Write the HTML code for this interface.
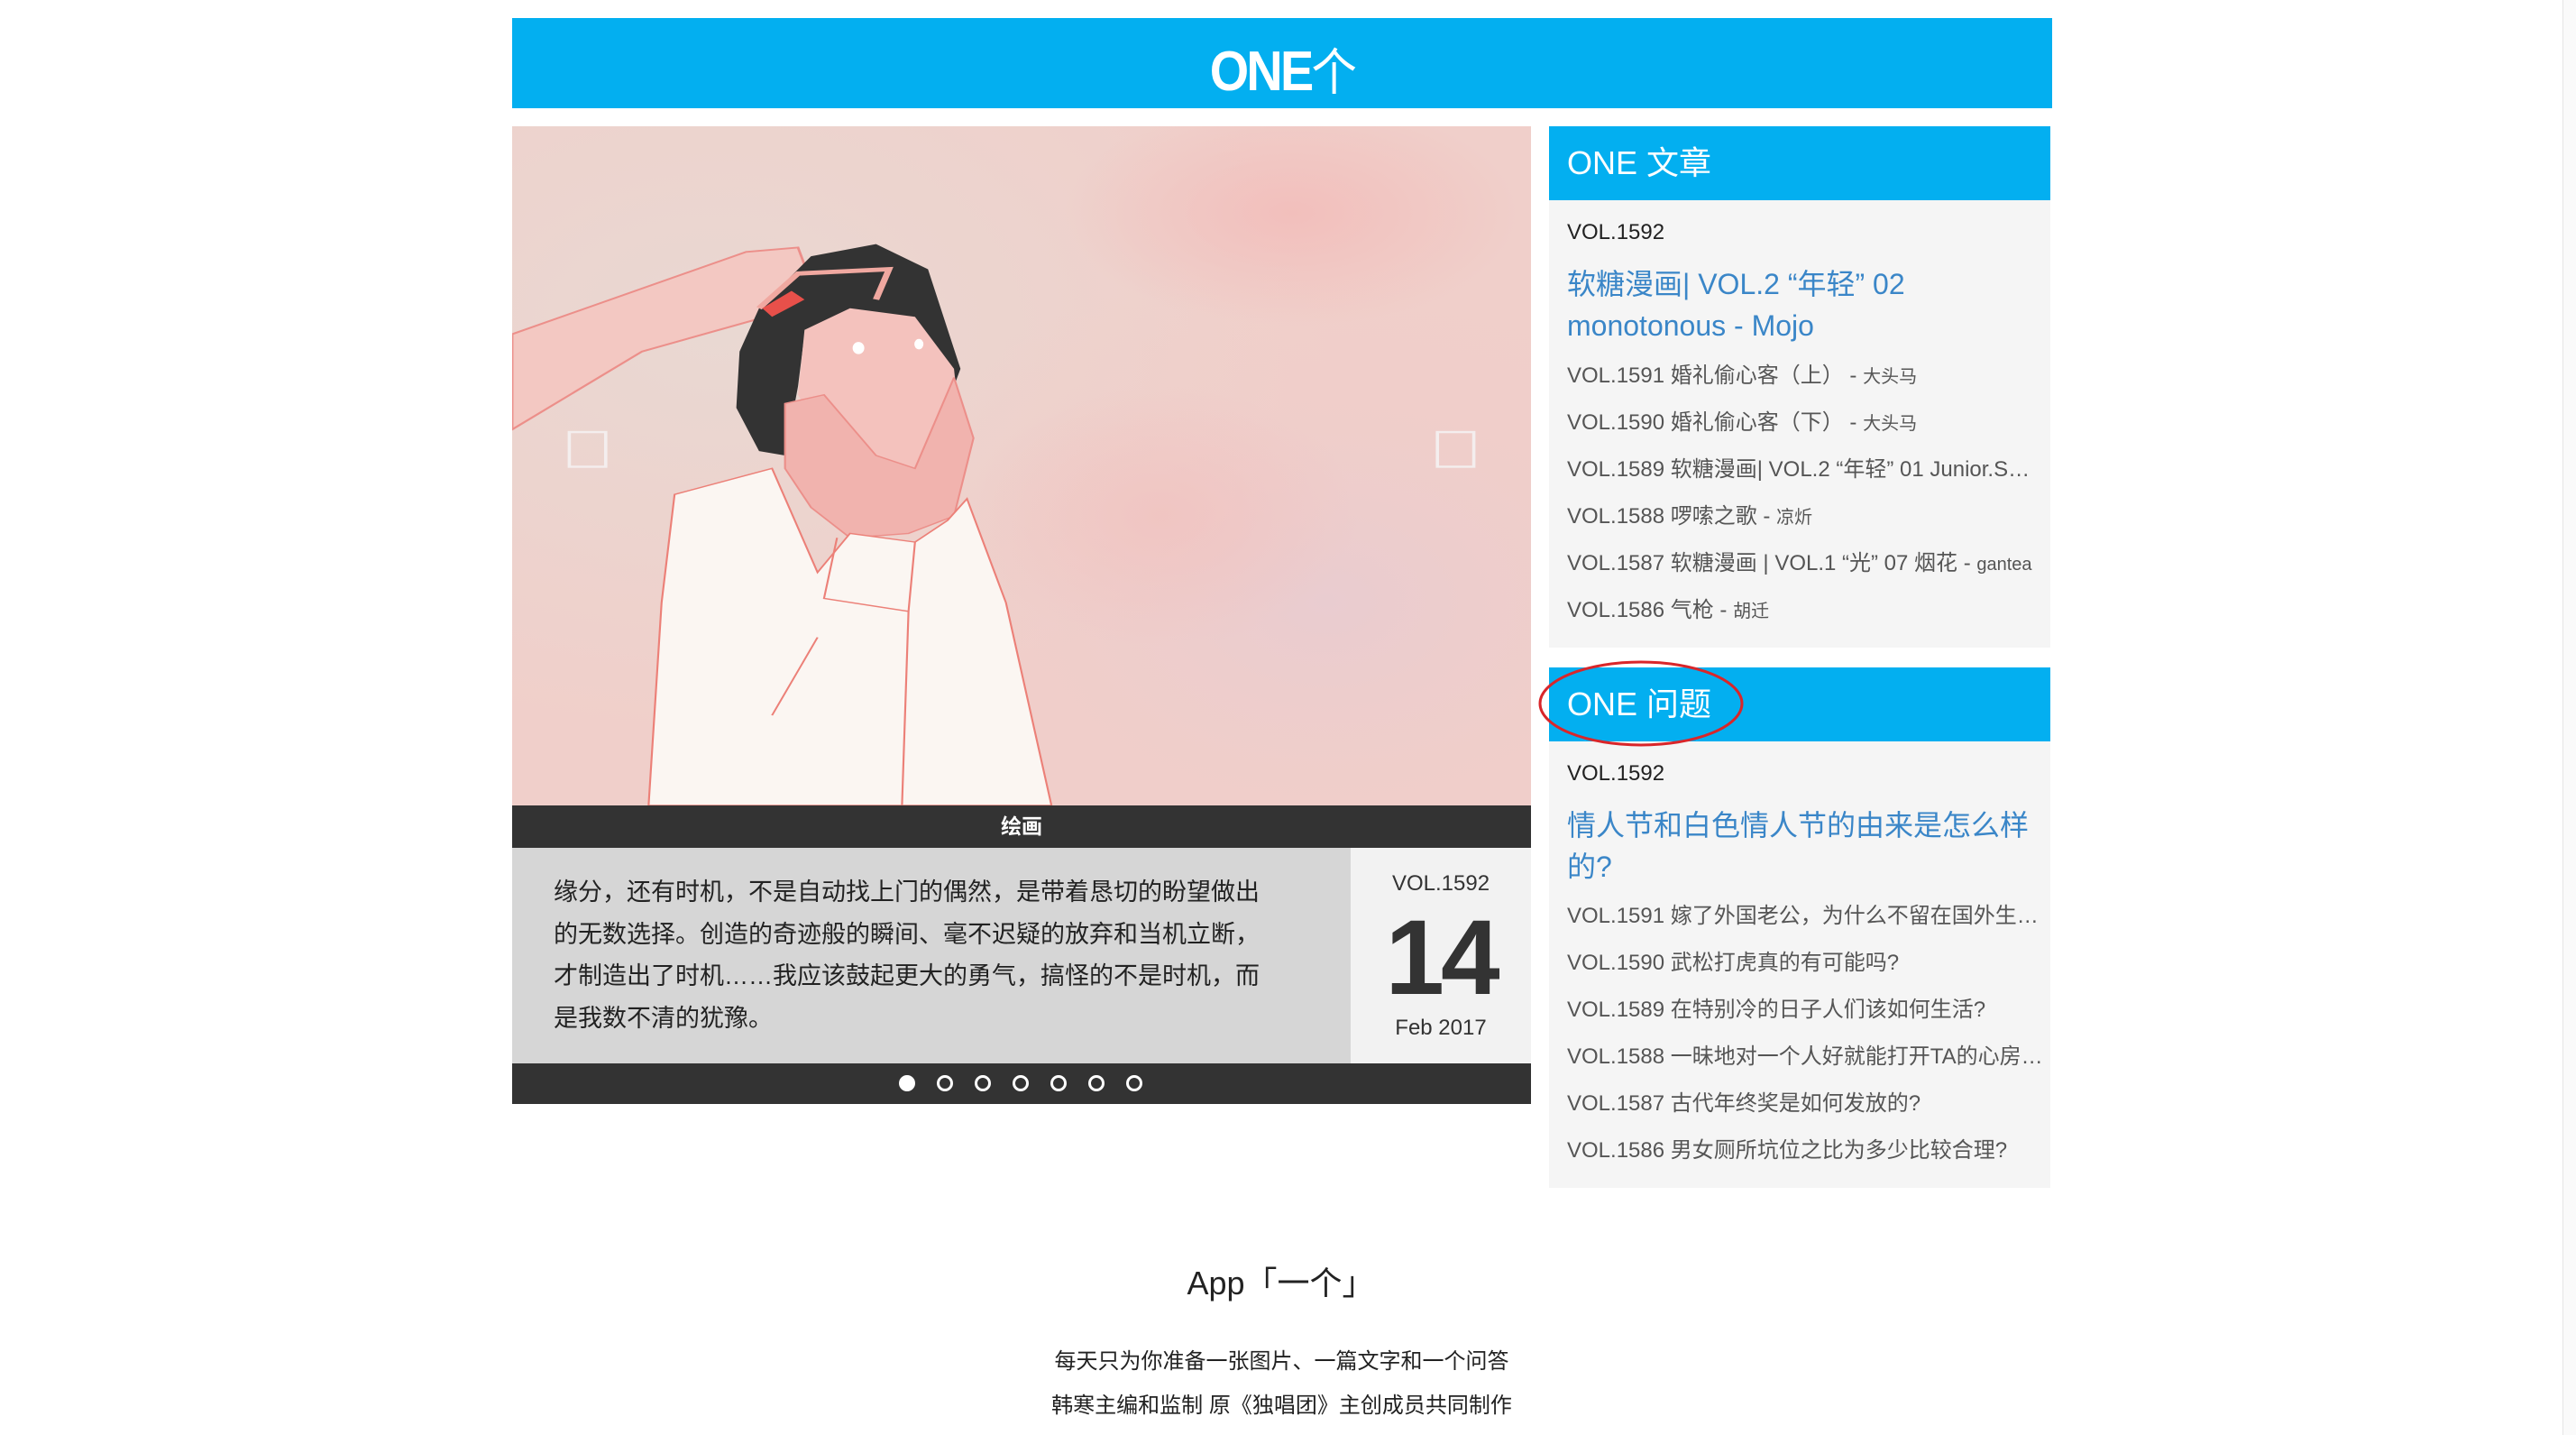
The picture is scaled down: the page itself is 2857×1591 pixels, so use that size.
<!DOCTYPE html>
<html><head><meta charset="utf-8"><style>
*{margin:0;padding:0;box-sizing:border-box}
body{width:2857px;height:1591px;background:#fff;font-family:"Liberation Sans","Noto Sans CJK SC",sans-serif;position:relative;overflow:hidden}
.a{position:absolute}
.hd{left:568px;top:20px;width:1708px;height:100px;background:#03aff0}
.logo{left:0;width:100%;top:16px;text-align:center;color:#fff;font-size:62px;font-weight:bold;letter-spacing:-3px;transform:scaleX(.9)}
.img{left:568px;top:140px;width:1130px;height:753px;overflow:hidden}
.cap{left:568px;top:893px;width:1130px;height:47px;background:#333;color:#fff;font-size:23px;font-weight:bold;text-align:center;line-height:47px}
.txt{left:568px;top:940px;width:930px;height:239px;background:#d6d6d6;padding:26px 98px 26px 46px;font-size:27px;line-height:46.5px;color:#222}
.date{left:1498px;top:940px;width:200px;height:239px;background:#f2f2f2;text-align:center;color:#333}
.dots{left:568px;top:1179px;width:1130px;height:45px;background:#333}
.dot{position:absolute;top:13px;width:18px;height:18px;border:3px solid #fff;border-radius:50%}
.panel{left:1718px;width:556px;background:#f5f5f5}
.ph{height:82px;background:#03aff0;color:#fff;font-size:36px;line-height:82px;padding-left:20px}
.pb{padding-left:20px;color:#555;font-size:24px}
.pb div{position:absolute;left:20px;white-space:nowrap}
.pb .v{color:#222}
.pb .t{color:#3a86c8;font-size:32px;line-height:46px}
.pb small{font-size:20px}
.ft{left:0;width:2857px;text-align:center;color:#222}
</style></head><body>
<div class="a hd"><div class="a logo">ONE<span style="font-weight:normal;font-size:56px">个</span></div></div>

<div class="a img">
<svg width="1130" height="753" viewBox="0 0 1568 1568" preserveAspectRatio="none">
<defs>
<radialGradient id="g1" cx="0.2" cy="0.3" r="0.6"><stop offset="0" stop-color="#e9d8d2"/><stop offset="1" stop-color="#f0cfca"/></radialGradient>
<radialGradient id="g2" cx="0.8" cy="0.7" r="0.5"><stop offset="0" stop-color="#e9ccd0"/><stop offset="1" stop-color="#f3cdc6" stop-opacity="0"/></radialGradient>
<radialGradient id="g3" cx="0.5" cy="0.5" r="0.5"><stop offset="0" stop-color="#f2bfbc"/><stop offset="1" stop-color="#f2bfbc" stop-opacity="0"/></radialGradient>
</defs>
<rect width="1568" height="1568" fill="url(#g1)"/>
<rect width="1568" height="1568" fill="url(#g2)"/>
<ellipse cx="1200" cy="200" rx="350" ry="260" fill="url(#g3)"/>
<ellipse cx="1000" cy="900" rx="300" ry="300" fill="url(#g3)" opacity=".6"/>
<path d="M0 480 L360 290 L440 280 L455 340 L390 440 L200 520 L0 700 Z" fill="#f3c8c2" stroke="#ec8f8a" stroke-width="4"/>
<path d="M460 300 L560 272 L640 330 L690 560 L680 600 L600 540 L520 470 L450 480 L440 600 L420 760 L380 750 L345 650 L350 520 L380 420 Z" fill="#333"/>
<path d="M450 470 L520 420 L620 440 L680 560 L690 700 L640 790 L560 780 L480 720 L440 620 Z" fill="#f4c2bd"/>
<ellipse cx="533" cy="512" rx="9" ry="14" fill="#fff"/><ellipse cx="626" cy="503" rx="7" ry="12" fill="#fff"/>
<path d="M420 790 L420 640 L480 620 L560 760 L620 790 L680 580 L710 720 L680 900 L610 940 L520 950 L460 880 Z" fill="#f1b3ae" stroke="#ec8f8a" stroke-width="3"/>
<path d="M250 850 L400 790 L470 1030 L520 940 L620 960 L670 910 L700 860 L760 1100 L830 1568 L210 1568 L230 1100 Z" fill="#fbf6f2" stroke="#ec8078" stroke-width="3"/>
<path d="M500 950 L480 1090 L610 1120 L620 960 M610 1120 L600 1568 M400 1360 L470 1180" fill="none" stroke="#ec8078" stroke-width="3"/>
<path d="M380 420 L440 340 L580 330 L560 400" fill="none" stroke="#f0a8a0" stroke-width="10"/>
<path d="M385 420 L430 380 L450 400 L400 440 Z" fill="#e8504a"/>
<rect x="88" y="706" width="56" height="80" fill="none" stroke="#f4eeee" stroke-width="5"/>
<rect x="1424" y="706" width="56" height="80" fill="none" stroke="#f4eeee" stroke-width="5"/>
</svg>
</div>
<div class="a cap">绘画</div>
<div class="a txt">缘分，还有时机，不是自动找上门的偶然，是带着恳切的盼望做出的无数选择。创造的奇迹般的瞬间、毫不迟疑的放弃和当机立断，才制造出了时机……我应该鼓起更大的勇气，搞怪的不是时机，而是我数不清的犹豫。</div>
<div class="a date">
<div class="a" style="top:26px;width:200px;font-size:24px">VOL.1592</div>
<div class="a" style="top:64px;width:200px;font-size:118px;font-weight:bold;line-height:116px;letter-spacing:-4px">14</div>
<div class="a" style="top:186px;width:200px;font-size:24px">Feb 2017</div>
</div>
<div class="a dots">
<div class="dot" style="left:429px;background:#fff"></div><div class="dot" style="left:471px"></div><div class="dot" style="left:513px"></div><div class="dot" style="left:555px"></div><div class="dot" style="left:597px"></div><div class="dot" style="left:639px"></div><div class="dot" style="left:681px"></div>
</div>

<div class="a panel" style="top:140px;height:578px">
<div class="ph">ONE 文章</div>
<div class="pb">
<div class="v" style="top:104px">VOL.1592</div>
<div class="t" style="top:152px">软糖漫画| VOL.2 “年轻” 02<br>monotonous - Mojo</div>
<div style="top:256px">VOL.1591 婚礼偷心客（上） - <small>大头马</small></div>
<div style="top:308px">VOL.1590 婚礼偷心客（下） - <small>大头马</small></div>
<div style="top:360px">VOL.1589 软糖漫画| VOL.2 “年轻” 01 Junior.S…</div>
<div style="top:412px">VOL.1588 啰嗦之歌 - <small>凉炘</small></div>
<div style="top:464px">VOL.1587 软糖漫画 | VOL.1 “光” 07 烟花 - <small>gantea</small></div>
<div style="top:516px">VOL.1586 气枪 - <small>胡迁</small></div>
</div></div>

<div class="a panel" style="top:740px;height:577px">
<div class="ph">ONE 问题</div>
<div class="pb">
<div class="v" style="top:104px">VOL.1592</div>
<div class="t" style="top:152px">情人节和白色情人节的由来是怎么样<br>的?</div>
<div style="top:255px">VOL.1591 嫁了外国老公，为什么不留在国外生…</div>
<div style="top:307px">VOL.1590 武松打虎真的有可能吗?</div>
<div style="top:359px">VOL.1589 在特别冷的日子人们该如何生活?</div>
<div style="top:411px">VOL.1588 一昧地对一个人好就能打开TA的心房…</div>
<div style="top:463px">VOL.1587 古代年终奖是如何发放的?</div>
<div style="top:515px">VOL.1586 男女厕所坑位之比为多少比较合理?</div>
</div></div>
<svg class="a" style="left:1700px;top:725px" width="240" height="110"><ellipse cx="120" cy="55" rx="112" ry="46" fill="none" stroke="#d9262a" stroke-width="3"/></svg>

<div class="a ft" style="top:1394px;font-size:36px;margin-left:-8px">App「一个」</div>
<div class="a ft" style="top:1489px;font-size:24px;margin-left:-7px">每天只为你准备一张图片、一篇文字和一个问答</div>
<div class="a ft" style="top:1538px;font-size:24px;margin-left:-7px">韩寒主编和监制 原《独唱团》主创成员共同制作</div>
<div class="a" style="left:2842px;top:0;width:15px;height:1591px;background:#fafafa;border-left:1px solid #e6e6e6"></div>
</body></html>
